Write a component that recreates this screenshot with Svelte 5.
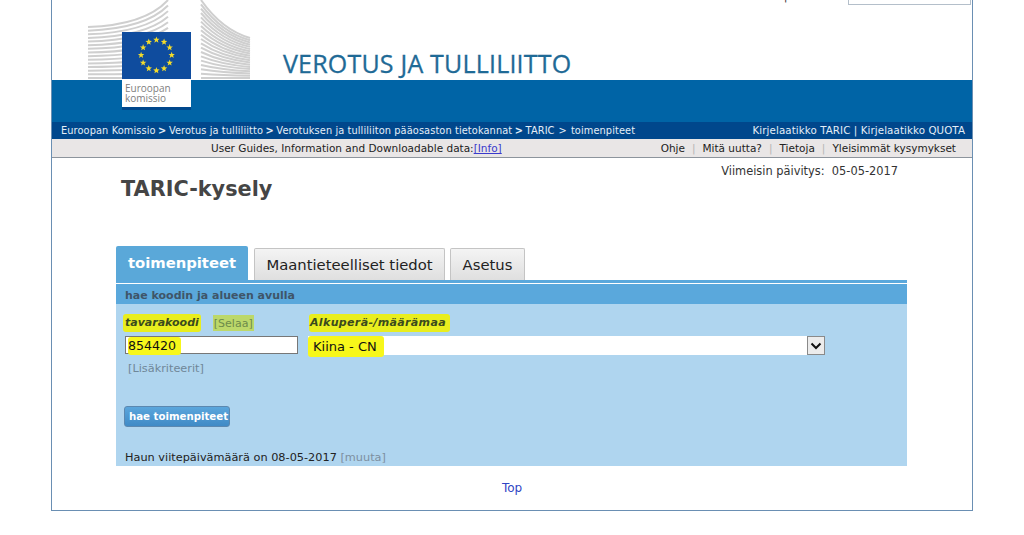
<script>
  const crumbs = [
    "Euroopan Komissio",
    "Verotus ja tulliliitto",
    "Verotuksen ja tulliliiton pääosaston tietokannat",
    "TARIC"
  ];
  const helpLinks = ["Ohje", "Mitä uutta?", "Tietoja", "Yleisimmät kysymykset"];

  // 12 stars of the flag
  const stars = Array.from({ length: 12 }, (_, i) => {
    const a = (i * Math.PI) / 6;
    return { x: 156.4 + 15.3 * Math.sin(a), y: 55.2 - 15.3 * Math.cos(a) };
  });

  function starPoints(cx, cy, r) {
    const pts = [];
    for (let i = 0; i < 10; i++) {
      const rad = i % 2 ? r * 0.42 : r;
      const a = (i * Math.PI) / 5;
      pts.push(`${(cx + rad * Math.sin(a)).toFixed(1)},${(cy - rad * Math.cos(a)).toFixed(1)}`);
    }
    return pts.join(" ");
  }

  // building wings: stripes converge from one tall edge to a shorter one
  const stripes = (n) => Array.from({ length: n }, (_, i) => i / (n - 1));
  const leftWing = stripes(15).map((t) => ({
    a: 27 + t * 51,
    b: t * 78,
    c: 25 + t * 53
  }));
  const rightWing = stripes(19).map((t) => ({
    a: t * 78,
    b: 38 + t * 40,
    c: 30 + t * 48
  }));
</script>

<div class="frame">
  <div class="top-strip">
    <span class="cut-text">Oikeudellinen | Haku</span>
    <span class="cut-box"></span>
  </div>

  <header class="masthead">
    <svg class="logo" width="170" height="110" viewBox="85 0 170 110" aria-hidden="true">
      {#each leftWing as l}
        <path d="M88 {l.a} Q 145 {l.c} 168 {l.b}" fill="none" stroke="#cfcfcf" stroke-width="2" />
      {/each}
      {#each rightWing as l}
        <path d="M201 {l.a} Q 222 {l.c} 250 {l.b}" fill="none" stroke="#cfcfcf" stroke-width="2" />
      {/each}
      <rect x="122" y="32" width="69" height="75" fill="#fff" />
      <rect x="122" y="32" width="69" height="47" fill="#0f4c9e" />
      <rect x="122" y="107" width="69" height="3" fill="#00478c" />
      {#each stars as s}
        <polygon points={starPoints(s.x, s.y, 3.4)} fill="#f5dc2a" />
      {/each}
      <text x="125" y="92" class="logo-text">Euroopan</text>
      <text x="125" y="102" class="logo-text">komissio</text>
    </svg>
    <h2 class="dg-title">VEROTUS JA TULLILIITTO</h2>
  </header>

  <div class="band"></div>

  <nav class="crumbs">
    <div class="crumb-list">
      {#each crumbs as c, i}
        <a href="#top">{c}</a>{#if i < crumbs.length - 1}<span class="chev">&gt;</span>{/if}
      {/each}
      <span class="gt">&gt;</span>
      <a href="#top">toimenpiteet</a>
    </div>
    <div class="crumb-right">Kirjelaatikko TARIC | Kirjelaatikko QUOTA</div>
  </nav>

  <div class="helpbar">
    <div class="guides">User Guides, Information and Downloadable data:<a href="#top">[Info]</a></div>
    <div class="help-links">
      {#each helpLinks as l, i}
        {#if i > 0}<span class="sep">|</span>{/if}
        <span>{l}</span>
      {/each}
    </div>
  </div>

  <div class="updated">Viimeisin päivitys:&nbsp; 05-05-2017</div>
  <h1>TARIC-kysely</h1>

  <section class="query">
    <div class="tabs">
      <div class="tab active">toimenpiteet</div>
      <div class="tab wide">Maantieteelliset tiedot</div>
      <div class="tab short">Asetus</div>
    </div>

    <div class="panel-head">hae koodin ja alueen avulla</div>
    <div class="panel">
      <div class="fields">
        <div class="col-code">
          <div class="labels">
            <label class="mark" for="code">tavarakoodi</label>
            <span class="browse">[Selaa]</span>
          </div>
          <div class="code-input" id="code"><span class="mark-val">854420</span></div>
        </div>
        <div class="col-origin">
          <div class="labels"><span class="mark origin-label">Alkuperä-/määrämaa</span></div>
          <div class="select">
            <span class="mark-val kiina">Kiina - CN</span>
            <span class="arrow">
              <svg width="12" height="8" viewBox="0 0 12 8"><path d="M1.5 1.5 L6 6 L10.5 1.5" fill="none" stroke="#111" stroke-width="2" /></svg>
            </span>
          </div>
        </div>
      </div>
      <div class="more">[Lisäkriteerit]</div>
      <button type="button">hae toimenpiteet</button>
      <div class="refdate">Haun viitepäivämäärä on 08-05-2017 <span class="muted">[muuta]</span></div>
    </div>
  </section>

  <div class="toplink"><a href="#top">Top</a></div>
</div>

<style>
  :global(body) {
    background: #fff;
    overflow: hidden;
  }

  .frame {
    box-sizing: border-box;
    width: 922px;
    height: 511px;
    margin-left: 51px;
    border: 1px solid #6a8fb3;
    border-top: none;
    font-family: "DejaVu Sans", Verdana, sans-serif;
    font-size: 11.3px;
    color: #222;
    position: relative;
  }

  a {
    text-decoration: none;
    color: inherit;
  }

  .top-strip {
    display: flex;
    justify-content: flex-end;
    height: 5px;
    overflow: hidden;
    padding-right: 1px;
  }

  .cut-text {
    margin: -10px 28px 0 0;
    color: #333;
  }

  .cut-box {
    box-sizing: border-box;
    width: 123px;
    height: 5px;
    border: 1px solid #b4bfca;
    border-top: none;
  }

  .masthead {
    height: 75px;
    padding-left: 231px;
    box-sizing: border-box;
  }

  .logo {
    position: absolute;
    left: 33px;
    top: 0;
    z-index: 1;
  }

  .dg-title {
    margin: 0;
    padding-top: 43px;
    font-family: "Open Sans", sans-serif;
    font-weight: 400;
    font-size: 25px;
    line-height: 30px;
    letter-spacing: 0.2px;
    color: #1f6a96;
    white-space: nowrap;
    -webkit-text-stroke: 0.3px #1f6a96;
  }

  .logo-text {
    font-family: "Open Sans", sans-serif;
    font-size: 10px;
    fill: #808080;
  }

  .band {
    height: 42px;
    background: #0064a6;
  }

  .crumbs {
    height: 17px;
    background: #00478c;
    color: #e4eef7;
    display: flex;
    justify-content: space-between;
    align-items: center;
    padding: 0 7px 0 9px;
    font-size: 9.8px;
    letter-spacing: 0.1px;
    line-height: 16px;
  }

  .crumb-right {
    font-size: 10.25px;
    margin-top: -1px;
  }

  .crumb-list {
    display: flex;
    align-items: center;
    white-space: pre;
  }

  .chev {
    font-weight: 700;
    margin: 0 2.5px;
  }

  .gt {
    margin: 0 4px;
  }

  .helpbar {
    box-sizing: border-box;
    height: 19px;
    background: #e9e6e6;
    border-bottom: 1px solid #8d949c;
    display: flex;
    align-items: center;
    justify-content: space-between;
    padding: 0 16px 0 159px;
    font-size: 10.5px;
  }

  .guides a {
    color: #3a3acc;
    text-decoration: underline;
  }

  .help-links {
    display: flex;
    gap: 7px;
    font-size: 10.5px;
  }

  .sep {
    color: #b5b5b5;
  }

  .updated {
    text-align: right;
    padding: 6px 74px 0 0;
    line-height: 14px;
    font-size: 11.4px;
    color: #333;
  }

  h1 {
    margin: -1px 0 0 69px;
    font-size: 20.8px;
    line-height: 25px;
    font-weight: 700;
    color: #454545;
  }

  .query {
    margin: 43px 0 0 64px;
    width: 791px;
  }

  .tabs {
    display: flex;
    align-items: flex-end;
    gap: 5px;
    height: 35px;
    border-bottom: 3px solid #5aa8dc;
  }

  .tab {
    box-sizing: border-box;
    height: 32px;
    padding-top: 7px;
    text-align: center;
    font-size: 14.8px;
    line-height: 18px;
    color: #222;
    background: linear-gradient(#f4f4f4, #dfdfdf);
    border: 1px solid #c4c4c4;
    border-bottom: none;
    border-radius: 2px 2px 0 0;
  }

  .tab.active {
    width: 132px;
    height: 34px;
    padding-top: 8px;
    margin-right: 1px;
    background: #5aa8d9;
    border: none;
    color: #fff;
    font-weight: 700;
    font-size: 14.8px;
  }

  .tab.wide {
    width: 191px;
  }

  .tab.short {
    width: 75px;
  }

  .panel-head {
    margin-top: 1px;
    height: 20px;
    line-height: 23px;
    padding-left: 9px;
    background: #5aa8dc;
    color: #3f5568;
    font-weight: 700;
    font-size: 11px;
  }

  .panel {
    box-sizing: border-box;
    height: 162px;
    background: #afd5ef;
    padding: 9px 0 0 9px;
    display: flex;
    flex-direction: column;
    align-items: flex-start;
  }

  .fields {
    display: flex;
    align-items: flex-start;
  }

  .col-code {
    width: 183px;
  }

  .labels {
    display: flex;
    align-items: center;
    height: 20px;
    margin-bottom: 3px;
  }

  .mark {
    background: #e9ee1e;
    border-radius: 3px;
    padding: 2px 2px 3px;
    margin-left: -2px;
    font-size: 11px;
    font-weight: 700;
    font-style: italic;
    color: #3a4a1e;
  }

  .browse {
    margin-left: 12px;
    padding: 2px 1px 1px;
    background: #bcd86a;
    color: #6d8b4a;
    font-size: 11px;
  }

  .origin-label {
    margin-left: 1px;
    padding: 2px 4px 3px 1px;
    letter-spacing: 0.35px;
  }

  .code-input {
    box-sizing: border-box;
    width: 173px;
    height: 18px;
    background: #fff;
    border: 1px solid #777;
    font-size: 12.6px;
    line-height: 16px;
    color: #111;
    padding-left: 2px;
  }

  .mark-val {
    background: #f7f71a;
    border-radius: 3px;
    padding: 1px 5px 1px 0;
    display: inline-block;
  }

  .select {
    box-sizing: border-box;
    width: 517px;
    height: 19px;
    background: #fff;
    display: flex;
    justify-content: space-between;
    align-items: center;
    font-size: 13px;
    color: #111;
  }

  .kiina {
    padding: 3px 7px 3px 5px;
    margin-top: 2px;
    line-height: 15px;
  }

  .arrow {
    box-sizing: border-box;
    width: 18px;
    height: 19px;
    background: #ececec;
    border: 1px solid #8a8a8a;
    display: flex;
    align-items: center;
    justify-content: center;
  }

  .more {
    margin: 7px 0 0 3px;
    color: #6f8798;
    line-height: 14px;
  }

  button {
    box-sizing: border-box;
    margin: 30px 0 0 -1px;
    width: 106px;
    height: 21px;
    padding: 0 0 0 3px;
    font-family: inherit;
    font-size: 10.2px;
    font-weight: 700;
    white-space: nowrap;
    color: #fff;
    background: linear-gradient(#5ba6dc, #3f8ac6);
    border: 1px solid #5b88b0;
    border-radius: 3px;
  }

  .refdate {
    margin-top: 24px;
    color: #222;
    line-height: 14px;
  }

  .muted {
    color: #7d8fa0;
  }

  .toplink {
    margin-top: 15px;
    text-align: center;
    line-height: 14px;
    font-size: 12px;
    color: #2f45c4;
  }
</style>
